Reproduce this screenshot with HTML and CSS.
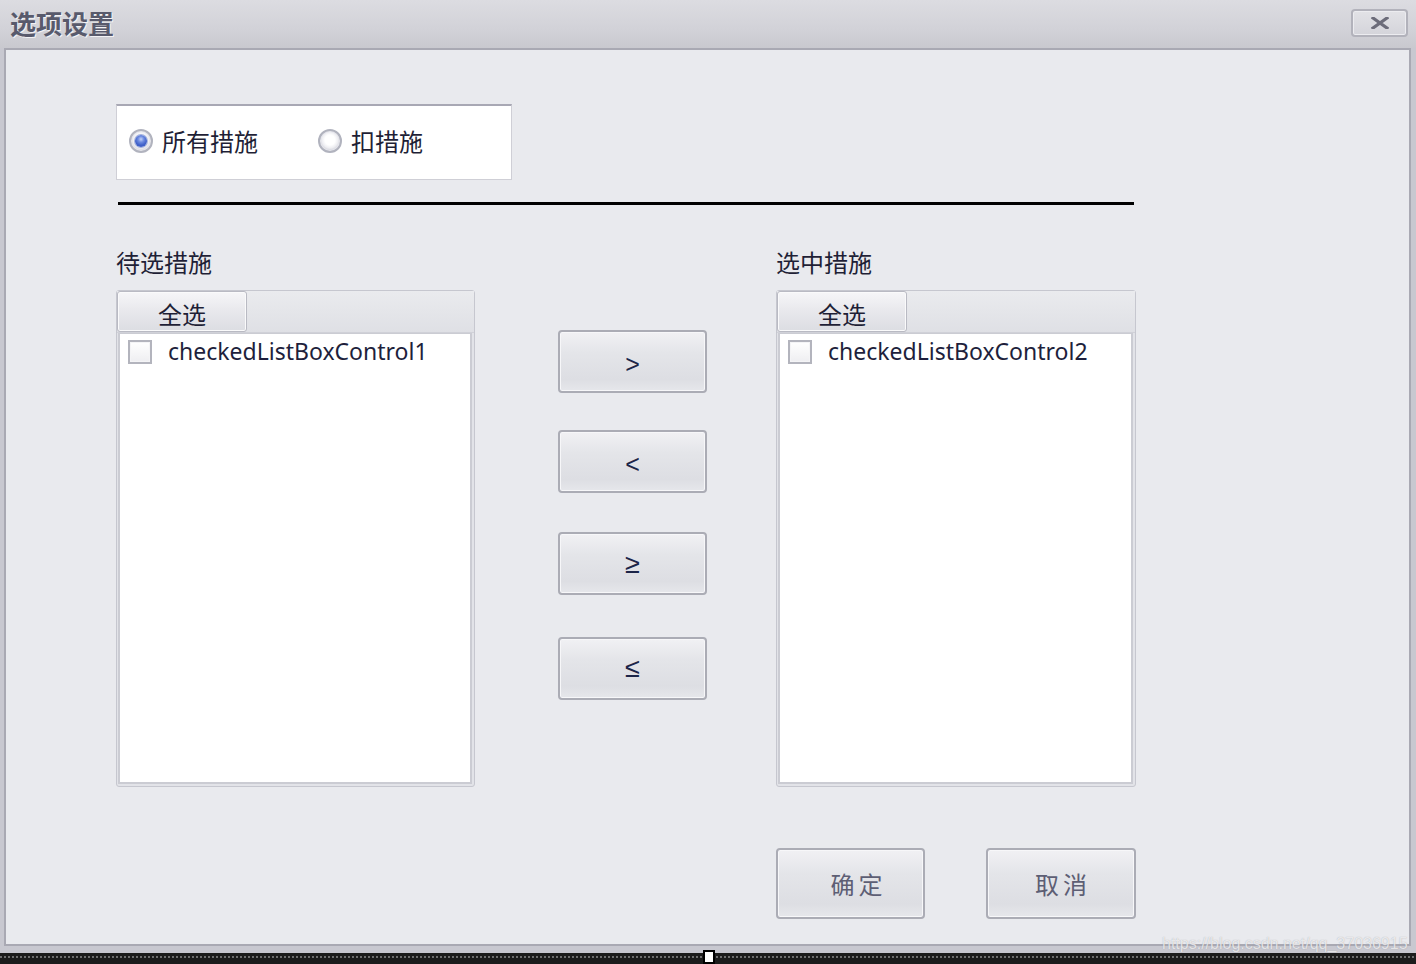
FILE: index.html
```html
<!DOCTYPE html>
<html lang="zh">
<head>
<meta charset="utf-8">
<title>选项设置</title>
<link rel="stylesheet" href="styles.css">
</head>
<body>
<div class="window">
  <div class="titlebar">
    <div class="title">选项设置</div>
    <div class="close">
      <svg width="18" height="12" viewBox="0 0 18 12"><path d="M2 1 L16 11 M16 1 L2 11" stroke="#6c6c7a" stroke-width="3.2" stroke-linecap="square" fill="none"/></svg>
    </div>
  </div>
  <div class="client">
    <div class="radio-box">
      <div class="radio"><span class="radio-dot checked"></span><span class="radio-text">所有措施</span></div>
      <div class="radio second"><span class="radio-dot"></span><span class="radio-text">扣措施</span></div>
    </div>
    <div class="rule"></div>
    <div class="main">
      <div class="col left">
        <div class="col-label">待选措施</div>
        <div class="panel">
          <div class="panel-head"><div class="tab">全选</div></div>
          <div class="list">
            <div class="item"><span class="check"></span><span class="item-text">checkedListBoxControl1</span></div>
          </div>
        </div>
      </div>
      <div class="moves">
        <div class="btn move m1">&gt;</div>
        <div class="btn move m2">&lt;</div>
        <div class="btn move m3">≥</div>
        <div class="btn move m4">≤</div>
      </div>
      <div class="col right">
        <div class="col-label">选中措施</div>
        <div class="panel">
          <div class="panel-head"><div class="tab">全选</div></div>
          <div class="list">
            <div class="item"><span class="check"></span><span class="item-text">checkedListBoxControl2</span></div>
          </div>
        </div>
        <div class="actions">
          <div class="btn action ok">确定</div>
          <div class="btn action cancel">取消</div>
        </div>
      </div>
    </div>
  </div>
  <div class="frame-bottom"></div>
  <div class="taskstrip"></div>
  <div class="handle"></div>
  <div class="watermark">https://blog.csdn.net/qq_37036915</div>
</div>
</body>
</html>
```

FILE: styles.css
```css
* { box-sizing: border-box; }
html, body { margin: 0; padding: 0; }
body {
  width: 1416px;
  height: 964px;
  overflow: hidden;
  font-family: "Noto Sans", "Noto Sans CJK SC", sans-serif;
  background: #c8c8d0;
}
.window {
  position: relative;
  width: 1416px;
  height: 964px;
  display: flex;
  flex-direction: column;
  background: #c8c8d0;
}
.titlebar {
  height: 48px;
  flex: none;
  display: flex;
  justify-content: space-between;
  align-items: flex-start;
  padding: 0 8px 0 10px;
  background: linear-gradient(#dcdce1, #d2d2d8 60%, #c9c9cf);
}
.title {
  margin-top: 5px;
  font-family: "Noto Sans CJK SC", sans-serif;
  font-weight: 700;
  font-size: 26px;
  line-height: 36px;
  color: #585a6c;
  text-shadow: 1px 1px 0 #f2f2f5;
}
.close {
  margin-top: 9px;
  width: 57px;
  height: 28px;
  border: 2px solid #b2b2bb;
  border-radius: 4px;
  background: linear-gradient(#e2e2e6, #d4d4da);
  box-shadow: inset 0 0 0 1px #ececf0;
  display: flex;
  align-items: center;
  justify-content: center;
}
.client {
  flex: none;
  margin-left: 4px;
  width: 1407px;
  height: 898px;
  border: 2px solid #a9a9b3;
  background: #e9eaee;
}
.radio-box {
  margin: 54px 0 0 110px;
  width: 396px;
  height: 76px;
  background: #fff;
  border: 1px solid #cfcfd6;
  border-top: 2px solid #a8a8b4;
  display: flex;
  align-items: center;
  padding: 0 0 4px 12px;
}
.radio {
  display: flex;
  align-items: center;
}
.radio.second { margin-left: 60px; }
.radio-dot {
  position: relative;
  width: 24px;
  height: 24px;
  border-radius: 50%;
  border: 2px solid #b1b3be;
  background: radial-gradient(circle at 50% 45%, #ffffff 0 5px, #eeeef2 8px, #d6d7de 10px);
  box-shadow: inset 0 0 0 1px #e6e6ec;
}
.radio-dot.checked::after {
  content: "";
  position: absolute;
  left: 4px;
  top: 4px;
  width: 12px;
  height: 12px;
  border-radius: 50%;
  background: radial-gradient(circle at 50% 35%, #c4d2f6 0, #6c8ae0 3px, #3f60c8 6px);
  box-shadow: 0 0 0 1px #a4b2dc;
}
.radio-text {
  margin-left: 9px;
  font-family: "Noto Sans CJK SC", sans-serif;
  font-size: 24px;
  line-height: 30px;
  color: #1f1f36;
}
.rule {
  margin: 22px 0 0 112px;
  width: 1016px;
  height: 3px;
  background: #000;
}
.main {
  display: flex;
  align-items: flex-start;
  margin: 43px 0 0 110px;
}
.col.left { width: 359px; }
.col.right { width: 360px; margin-left: 69px; }
.col-label {
  height: 28px;
  line-height: 28px;
  margin-bottom: 14px;
  font-family: "Noto Sans CJK SC", sans-serif;
  font-size: 24px;
  color: #1f1f36;
}
.panel {
  height: 497px;
  border: 1px solid #c6c7cf;
  border-radius: 3px;
  background: #e2e3e8;
  display: flex;
  flex-direction: column;
}
.panel-head {
  height: 42px;
  flex: none;
  background: linear-gradient(#eaebee, #dfe0e5);
  border-bottom: 1px solid #d0d1d8;
}
.tab {
  width: 130px;
  height: 41px;
  border: 1px solid #b9bac3;
  border-radius: 3px;
  background: linear-gradient(#f6f6f8, #e9e9ed 45%, #dcdde2);
  box-shadow: inset 0 0 0 1px #fafafb;
  font-family: "Noto Sans CJK SC", sans-serif;
  font-size: 24px;
  line-height: 44px;
  text-align: center;
  color: #1f1f36;
}
.list {
  flex: 1;
  margin: 0 2px 2px 1px;
  background: #fff;
  border: 2px solid #cbccd3;
  border-top-width: 1px;
  padding: 4px 0 0 8px;
}
.item {
  display: flex;
  align-items: center;
  height: 26px;
}
.check {
  width: 24px;
  height: 24px;
  margin-top: 2px;
  border: 2px solid #b3b4bd;
  background: linear-gradient(#ffffff, #eeeef1);
  box-shadow: inset 0 0 0 1px #f4f4f6;
}
.item-text {
  margin-left: 16px;
  font-size: 23px;
  line-height: 26px;
  color: #1e1f3c;
  white-space: nowrap;
}
.moves {
  width: 149px;
  margin: 82px 0 0 83px;
  display: flex;
  flex-direction: column;
}
.btn {
  border: 2px solid #abacb5;
  border-radius: 4px;
  background: linear-gradient(#f1f1f4, #e4e5e9 35%, #dddee3 80%, #e6e7eb);
  box-shadow: inset 0 0 0 1px #f7f7f9;
  display: flex;
  align-items: center;
  justify-content: center;
}
.move {
  height: 63px;
  padding-top: 5px;
  font-family: "Liberation Sans", sans-serif;
  font-size: 25px;
  color: #1c2548;
}
.m2 { margin-top: 37px; }
.m3 { margin-top: 39px; padding-top: 1px; font-size: 27px; }
.m4 { margin-top: 42px; padding-top: 0; font-size: 27px; }
.actions {
  margin-top: 61px;
  display: flex;
  justify-content: space-between;
}
.action {
  height: 71px;
  font-family: "Noto Sans CJK SC", sans-serif;
  font-size: 24px;
  letter-spacing: 4px;
  color: #5d5e74;
}
.action.ok { width: 149px; padding-left: 16px; }
.action.cancel { width: 150px; padding-left: 4px; }
.frame-bottom {
  height: 7px;
  flex: none;
  background: #c8c8d0;
}
.taskstrip {
  height: 11px;
  flex: none;
  background-color: #1c1c1c;
  background-image: repeating-linear-gradient(90deg, #6f6f6f 0 2px, transparent 2px 4px);
  background-size: 100% 2px;
  background-position: 0 3px;
  background-repeat: no-repeat;
}
.handle {
  position: absolute;
  left: 703px;
  top: 950px;
  width: 12px;
  height: 14px;
  background: #fff;
  border: 2px solid #000;
}
.watermark {
  position: absolute;
  left: 1162px;
  top: 933px;
  font-family: "Liberation Sans", sans-serif;
  font-size: 16px;
  line-height: 22px;
  color: rgba(255, 255, 255, 0.72);
  text-shadow: 0 0 1px rgba(120, 120, 130, 0.6);
  white-space: nowrap;
}
```
